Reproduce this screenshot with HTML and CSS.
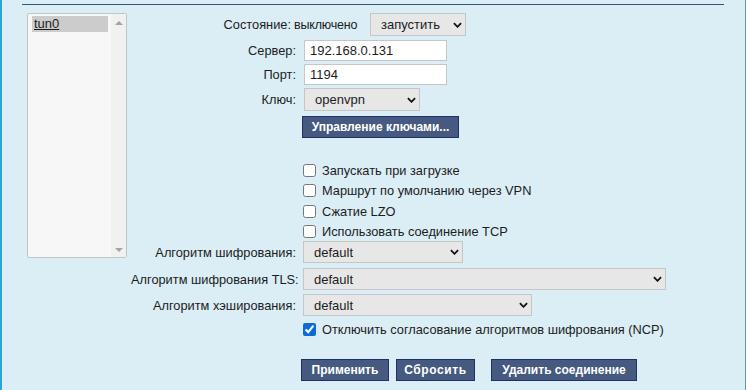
FILE: index.html
```html
<!DOCTYPE html>
<html lang="ru">
<head>
  <meta charset="UTF-8">
  <title>OpenVPN</title>
  <link rel="stylesheet" href="styles.css">
</head>
<body>
  <div class="page">
    <div class="rule"></div>
    <div class="content">
      <div class="listbox">
        <div class="list-items">
          <div class="list-item selected">tun0</div>
        </div>
        <div class="list-scroll">
          <span class="arrow-up"></span>
          <span class="arrow-down"></span>
        </div>
      </div>

      <form class="settings">
        <div class="row row-state">
          <label>Состояние:</label>
          <div class="field">
            <span class="state">выключено</span>
            <div class="select-wrap state-select">
              <select><option>запустить</option></select>
              <svg class="chevron" viewBox="0 0 10 6"><path d="M1 1 L5 5 L9 1" /></svg>
            </div>
          </div>
        </div>

        <div class="row row-server">
          <label>Сервер:</label>
          <div class="field"><input type="text" class="text-input" value="192.168.0.131"></div>
        </div>

        <div class="row row-port">
          <label>Порт:</label>
          <div class="field"><input type="text" class="text-input" value="1194"></div>
        </div>

        <div class="row row-key">
          <label>Ключ:</label>
          <div class="field">
            <div class="select-wrap key-select">
              <select><option>openvpn</option></select>
              <svg class="chevron" viewBox="0 0 10 6"><path d="M1 1 L5 5 L9 1" /></svg>
            </div>
          </div>
        </div>

        <div class="row row-keys">
          <span></span>
          <div class="field"><button type="button" class="btn btn-keys">Управление ключами...</button></div>
        </div>

        <div class="row row-check first-check">
          <span></span>
          <label class="check"><input type="checkbox"> Запускать при загрузке</label>
        </div>
        <div class="row row-check tall">
          <span></span>
          <label class="check"><input type="checkbox"> Маршрут по умолчанию через VPN</label>
        </div>
        <div class="row row-check">
          <span></span>
          <label class="check"><input type="checkbox"> Сжатие LZO</label>
        </div>
        <div class="row row-check">
          <span></span>
          <label class="check"><input type="checkbox"> Использовать соединение TCP</label>
        </div>

        <div class="row row-select">
          <label>Алгоритм шифрования:</label>
          <div class="field">
            <div class="select-wrap cipher-select">
              <select><option>default</option></select>
              <svg class="chevron" viewBox="0 0 10 6"><path d="M1 1 L5 5 L9 1" /></svg>
            </div>
          </div>
        </div>

        <div class="row row-select spaced">
          <label>Алгоритм шифрования TLS:</label>
          <div class="field">
            <div class="select-wrap tls-select">
              <select><option>default</option></select>
              <svg class="chevron" viewBox="0 0 10 6"><path d="M1 1 L5 5 L9 1" /></svg>
            </div>
          </div>
        </div>

        <div class="row row-select spaced-sm">
          <label>Алгоритм хэширования:</label>
          <div class="field">
            <div class="select-wrap hash-select">
              <select><option>default</option></select>
              <svg class="chevron" viewBox="0 0 10 6"><path d="M1 1 L5 5 L9 1" /></svg>
            </div>
          </div>
        </div>

        <div class="row row-check ncp">
          <span></span>
          <label class="check"><input type="checkbox" checked> Отключить согласование алгоритмов шифрования (NCP)</label>
        </div>

        <div class="row row-actions">
          <span></span>
          <div class="field actions">
            <button type="button" class="btn btn-apply">Применить</button>
            <button type="button" class="btn btn-reset">Сбросить</button>
            <button type="button" class="btn btn-delete">Удалить соединение</button>
          </div>
        </div>
      </form>
    </div>
  </div>
</body>
</html>
```

FILE: styles.css
```css
:root {
  --bg: #dbeef5;
  --frame: #2ea3da;
  --rule: #3a5573;
  --text: #1c1c1c;
  --field-border: #c6c6c6;
  --select-bg: #e7e7e7;
  --btn-bg: #46597f;
  --btn-border: #1f2e6c;
}

html, body {
  margin: 0;
  background-color: var(--bg);
}

body {
  font-family: "Liberation Sans", Arial, sans-serif;
  font-size: 12.8px;
  color: var(--text);
}

.page {
  height: 390px;
  box-sizing: border-box;
  border-left: 2px solid var(--frame);
  border-right: 1px solid #4d9dcb;
  overflow: hidden;
}

.rule {
  margin: 4px 21px 0 20px;
  border-top: 1px solid var(--rule);
}

.content {
  display: flex;
  align-items: flex-start;
  padding-left: 25px;
  margin-top: 8px;
}

/* list of connections */
.listbox {
  display: flex;
  width: 100px;
  height: 245px;
  box-sizing: border-box;
  border: 1px solid #c4c4c4;
  border-radius: 2px;
  background-color: #f7f7f7;
}

.list-items {
  flex: 1;
  padding: 2px 3px 0 4px;
}

.list-item {
  height: 16px;
  line-height: 16px;
  padding-left: 2px;
  font-size: 13px;
}

.list-item.selected {
  background-color: #cccccc;
  text-decoration: underline;
}

.list-scroll {
  width: 15px;
  background-color: #f1f1f1;
  display: flex;
  flex-direction: column;
  justify-content: space-between;
  align-items: center;
  padding: 7px 0 5px;
}

.arrow-up,
.arrow-down {
  width: 0;
  height: 0;
  border-left: 4px solid transparent;
  border-right: 4px solid transparent;
}

.arrow-up {
  border-bottom: 4px solid #a3a3a3;
}

.arrow-down {
  border-top: 4px solid #a3a3a3;
}

/* settings form */
.settings {
  margin: 0 0 0 4px;
}

.row {
  display: grid;
  grid-template-columns: 165px auto;
  column-gap: 7px;
  align-items: center;
}

.row > label:first-child {
  text-align: right;
  white-space: nowrap;
}

.field {
  display: flex;
  align-items: center;
}

.row-state {
  height: 23px;
  grid-template-columns: 160px auto;
  column-gap: 3px;
}

.state {
  display: inline-block;
  width: 68px;
  margin-right: 8px;
  font-size: 12.5px;
  letter-spacing: -0.2px;
  white-space: nowrap;
}

.row-server {
  height: 21px;
  margin-top: 4px;
}

.row-port {
  height: 21px;
  margin-top: 3px;
}

.row-key {
  height: 23px;
  margin-top: 3px;
}

.row-keys {
  height: 22px;
  margin-top: 5px;
}

.row-check {
  height: 20px;
}

.row-check.tall {
  height: 21px;
}

.first-check {
  margin-top: 22px;
}

.row-select {
  height: 22px;
}

.row-select.spaced {
  margin-top: 5px;
}

.row-select.spaced-sm {
  margin-top: 4px;
}

.ncp {
  margin-top: 3px;
}

.row-actions {
  height: 22px;
  margin-top: 20px;
}

.text-input {
  width: 143px;
  height: 21px;
  box-sizing: border-box;
  margin: 0 0 0 1px;
  padding: 0 5px;
  border: 1px solid var(--field-border);
  border-radius: 0;
  background-color: #ffffff;
  font-family: inherit;
  font-size: 13px;
  color: var(--text);
}

.select-wrap {
  position: relative;
  height: 22px;
}

.select-wrap select {
  appearance: none;
  width: 100%;
  height: 100%;
  box-sizing: border-box;
  margin: 0;
  padding: 0 20px 0 10px;
  border: 1px solid var(--field-border);
  border-radius: 0;
  background-color: var(--select-bg);
  font-family: inherit;
  font-size: 13px;
  color: var(--text);
}

.chevron {
  position: absolute;
  right: 4px;
  top: 50%;
  width: 9px;
  height: 6px;
  margin-top: -3px;
  fill: none;
  stroke: #111111;
  stroke-width: 2;
  pointer-events: none;
}

.state-select {
  width: 96px;
  height: 23px;
}

.key-select {
  width: 116px;
  height: 23px;
  margin-left: 1px;
}

.cipher-select {
  width: 160px;
}

.tls-select {
  width: 363px;
}

.hash-select {
  width: 229px;
}

.check {
  display: flex;
  align-items: center;
  white-space: nowrap;
}

.check input {
  width: 13px;
  height: 13px;
  margin: 0 6px 0 0;
  accent-color: #0b6bd8;
}

/* buttons */
.btn {
  height: 22px;
  box-sizing: border-box;
  padding: 0;
  border: 1px solid var(--btn-border);
  border-radius: 0;
  background-color: var(--btn-bg);
  color: #ffffff;
  font-family: inherit;
  font-size: 12px;
  font-weight: bold;
  cursor: pointer;
}

.btn-keys {
  width: 157px;
  margin-left: -1px;
}

.actions {
  margin-left: -2px;
  gap: 7px;
}

.btn-apply {
  width: 88px;
}

.btn-reset {
  width: 79px;
  letter-spacing: 0.6px;
}

.btn-delete {
  width: 146px;
  margin-left: 9px;
}
```
